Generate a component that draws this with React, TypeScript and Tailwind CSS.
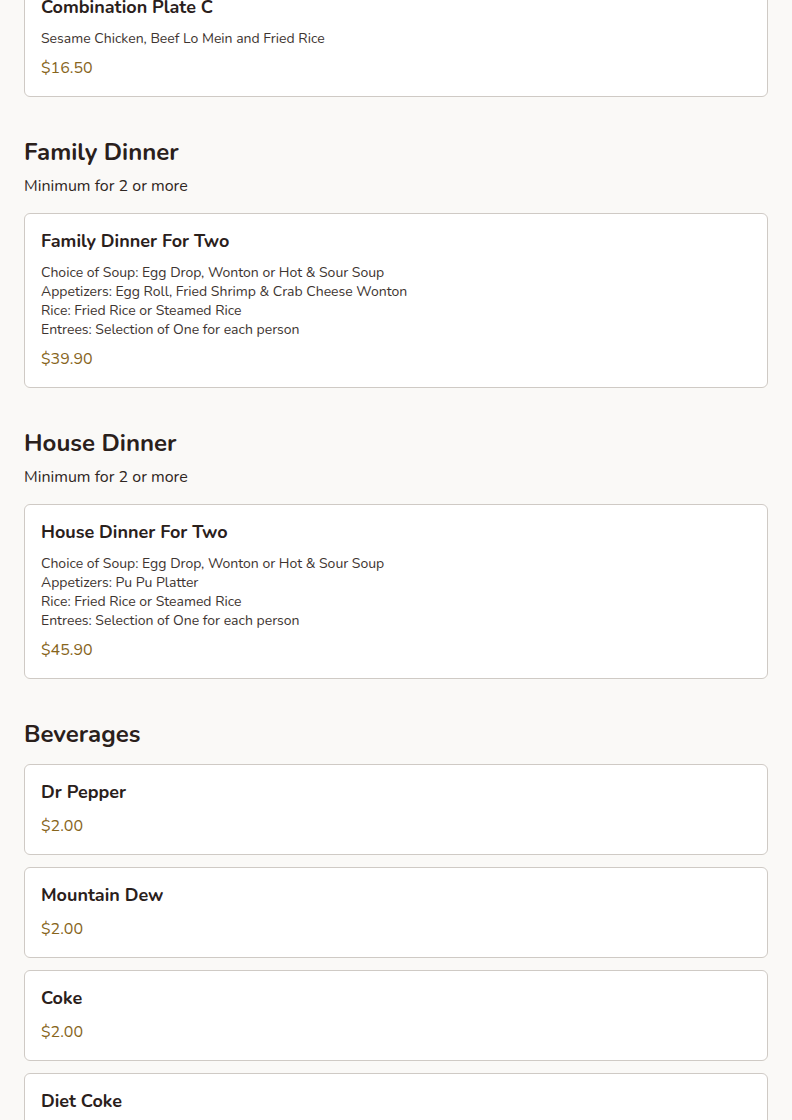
type Item = { name: string; desc?: string; price: string };
type Section = { title?: string; note?: string; items: Item[] };

const sections: Section[] = [
  {
    items: [{ name: 'Combination Plate C', desc: 'Sesame Chicken, Beef Lo Mein and Fried Rice', price: '$16.50' }],
  },
  {
    title: 'Family Dinner',
    note: 'Minimum for 2 or more',
    items: [
      {
        name: 'Family Dinner For Two',
        desc: 'Choice of Soup: Egg Drop, Wonton or Hot & Sour Soup\nAppetizers: Egg Roll, Fried Shrimp & Crab Cheese Wonton\nRice: Fried Rice or Steamed Rice\nEntrees: Selection of One for each person',
        price: '$39.90',
      },
    ],
  },
  {
    title: 'House Dinner',
    note: 'Minimum for 2 or more',
    items: [
      {
        name: 'House Dinner For Two',
        desc: 'Choice of Soup: Egg Drop, Wonton or Hot & Sour Soup\nAppetizers: Pu Pu Platter\nRice: Fried Rice or Steamed Rice\nEntrees: Selection of One for each person',
        price: '$45.90',
      },
    ],
  },
  {
    title: 'Beverages',
    items: [
      { name: 'Dr Pepper', price: '$2.00' },
      { name: 'Mountain Dew', price: '$2.00' },
      { name: 'Coke', price: '$2.00' },
      { name: 'Diet Coke', price: '$2.00' },
      { name: 'Sprite', price: '$2.00' },
    ],
  },
];

function MenuCard({ item }: { item: Item }) {
  return (
    <div className="bg-white border border-[#cfcac5] rounded-md p-4">
      <h3 className="text-[18px] leading-[22px] font-bold text-[#2a201b]">{item.name}</h3>
      {item.desc && (
        <p className="mt-[11px] text-[14px] leading-[19px] text-[#3d3430] whitespace-pre-line">{item.desc}</p>
      )}
      <div className={item.desc ? 'mt-2 text-[16px] leading-6 text-[#87651c]' : 'mt-[11px] text-[16px] leading-6 text-[#87651c]'}>
        {item.price}
      </div>
    </div>
  );
}

export default function App() {
  return (
    <div className="min-h-screen bg-[#faf9f7] font-['Nunito','Lato',sans-serif] overflow-hidden">
      <div className="px-6 mt-[-21px] pb-10">
        {sections.map((s, i) => (
          <section key={i} className={i === 0 ? '' : 'mt-[39px]'}>
            {s.title && (
              <h2 className="text-[24px] leading-8 font-bold text-[#2a201b]">{s.title}</h2>
            )}
            {s.note && <p className="mt-1.5 text-[16px] leading-6 text-[#2f2622]">{s.note}</p>}
            <div className={s.note ? 'mt-[15px] flex flex-col gap-3' : s.title ? 'mt-[14px] flex flex-col gap-3' : 'flex flex-col gap-3'}>
              {s.items.map((it) => (
                <MenuCard key={it.name} item={it} />
              ))}
            </div>
          </section>
        ))}
      </div>
    </div>
  );
}
